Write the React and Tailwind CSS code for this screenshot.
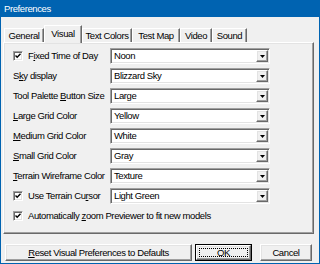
const SUNKEN =
  'border border-t-[#a0a0a0] border-l-[#a0a0a0] border-r-white border-b-white shadow-[inset_1px_1px_0_#696969,inset_-1px_-1px_0_#e3e3e3]';
const RAISED =
  'border border-t-white border-l-white border-r-[#696969] border-b-[#696969] shadow-[inset_-1px_-1px_0_#a0a0a0,inset_1px_1px_0_#e3e3e3]';

const TABS = [
  { name: 'General', w: 'w-[40px]' },
  { name: 'Visual', w: 'w-[38px]', active: true },
  { name: 'Text Colors', w: 'w-[50px]' },
  { name: 'Test Map', w: 'w-[48px]' },
  { name: 'Video', w: 'w-[32px]' },
  { name: 'Sound', w: 'w-[35px]' },
];

const ROWS = [
  { label: 'Fixed Time of Day', key: 1, value: 'Noon', check: true },
  { label: 'Sky display', key: 1, value: 'Blizzard Sky' },
  { label: 'Tool Palette Button Size', key: 13, value: 'Large' },
  { label: 'Large Grid Color', key: 0, value: 'Yellow' },
  { label: 'Medium Grid Color', key: 0, value: 'White' },
  { label: 'Small Grid Color', key: 0, value: 'Gray' },
  { label: 'Terrain Wireframe Color', key: 0, value: 'Texture' },
  { label: 'Use Terrain Cursor', key: 14, value: 'Light Green', check: true },
];

function Mnemonic({ text, at }) {
  if (at == null) return <span>{text}</span>;
  return (
    <span>
      {text.slice(0, at)}
      <u className="underline-offset-[1px]">{text[at]}</u>
      {text.slice(at + 1)}
    </span>
  );
}

function CheckBox() {
  return (
    <div className={`w-[10px] h-[10px] bg-white flex items-center justify-center shrink-0 ${SUNKEN}`}>
      <svg width="6" height="6" viewBox="0 0 6 6">
        <path d="M0.5 2.5 L2.2 4.3 L5.5 0.8" stroke="#000" strokeWidth="1.4" fill="none" />
      </svg>
    </div>
  );
}

function Combo({ value }) {
  return (
    <div className={`w-[160px] h-[16px] bg-white flex items-stretch ${SUNKEN} p-px`}>
      <div className="flex-1 pl-[2px] flex items-center">{value}</div>
      <div className={`w-[12px] bg-[#f0f0f0] flex items-center justify-center ${RAISED}`}>
        <svg width="5" height="3" viewBox="0 0 5 3">
          <polygon points="0,0 5,0 2.5,3" fill="#000" />
        </svg>
      </div>
    </div>
  );
}

export default function App() {
  return (
    <div className="w-[320px] h-[264px] bg-[#0063b1] flex flex-col px-px pb-px font-['Liberation_Sans',Arial,sans-serif] text-[9.5px] tracking-[-0.4px] text-black leading-none">
      <div className="h-[17px] flex items-center pl-[3px] text-white">Preferences</div>

      <div className="flex-1 bg-[#f0f0f0] flex flex-col">
        {/* tabs */}
        <div className="flex items-end h-[17px] mt-[8px] ml-[3px]">
          {TABS.map((t) =>
            t.active ? (
              <div
                key={t.name}
                className={`${t.w} h-[18px] -mb-px relative z-10 bg-[#f0f0f0] border-l border-t border-white border-r border-r-[#696969] shadow-[inset_-1px_0_0_#a0a0a0] flex items-center justify-center pb-[2px]`}
              >
                {t.name}
              </div>
            ) : (
              <div
                key={t.name}
                className={`${t.w} h-[14px] border-l border-t border-white border-r border-r-[#696969] shadow-[inset_-1px_0_0_#a0a0a0] flex items-center justify-center`}
              >
                {t.name}
              </div>
            )
          )}
        </div>

        {/* tab page */}
        <div className="ml-[2px] w-[311px] h-[192px] border border-t-white border-l-white border-r-[#696969] border-b-[#696969] shadow-[inset_-1px_-1px_0_#a0a0a0,inset_1px_1px_0_#e3e3e3] pt-[5px] pl-[9px] flex flex-col gap-[4px]">
          {ROWS.map((r) => (
            <div key={r.label} className="h-[16px] flex items-center">
              <div className="w-[97px] flex items-center gap-[5px]">
                {r.check && <CheckBox />}
                <Mnemonic text={r.label} at={r.key} />
              </div>
              <Combo value={r.value} />
            </div>
          ))}
          <div className="h-[16px] flex items-center gap-[5px]">
            <CheckBox />
            <Mnemonic text="Automatically zoom Previewer to fit new models" at={14} />
          </div>
        </div>

        {/* buttons */}
        <div className="flex mt-[10px] h-[17px]">
          <div className={`ml-[4px] w-[187px] flex items-center justify-center ${RAISED}`}>
            <Mnemonic text="Reset Visual Preferences to Defaults" at={0} />
          </div>
          <div className="ml-[3px] w-[57px] border border-black relative">
            <div className={`h-full flex items-center justify-center ${RAISED}`}>OK</div>
            <div className="absolute inset-[3px] border border-dotted border-black" />
          </div>
          <div className={`ml-[8px] w-[52px] flex items-center justify-center ${RAISED}`}>Cancel</div>
        </div>
      </div>
    </div>
  );
}
